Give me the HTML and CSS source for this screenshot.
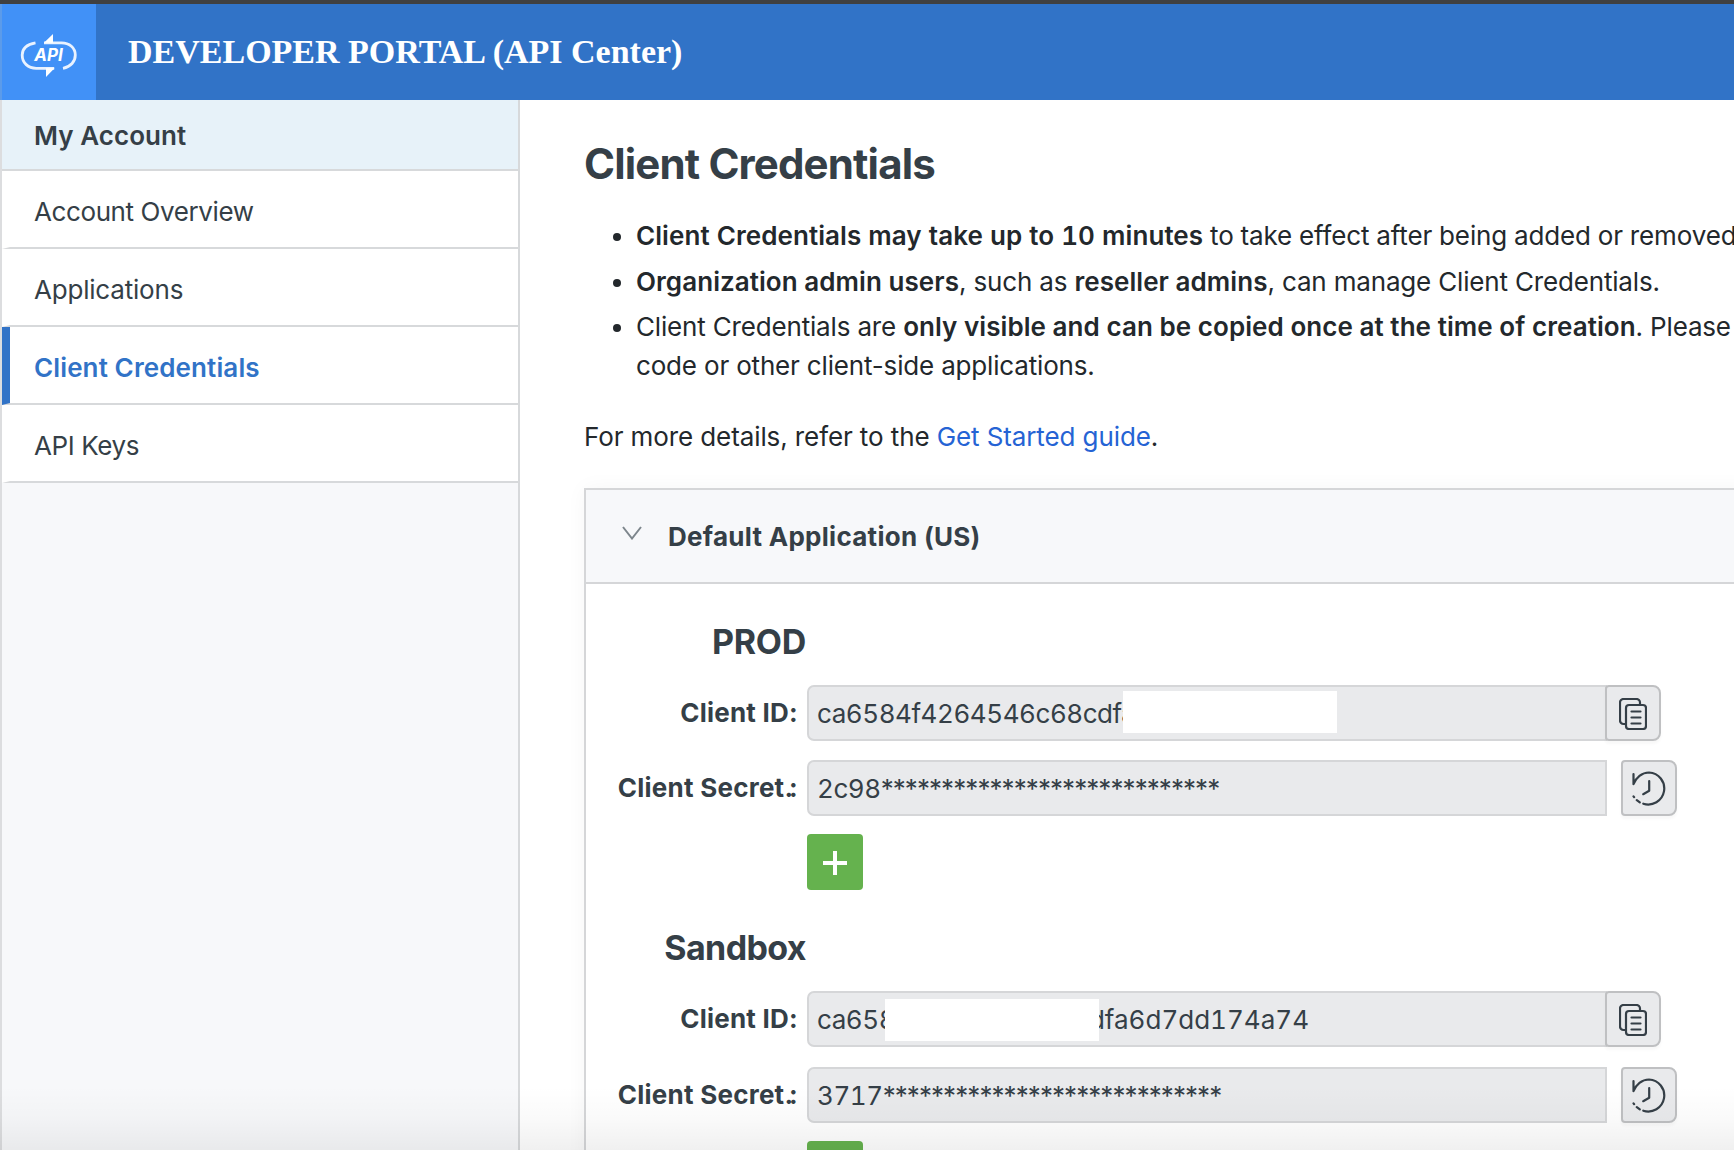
FILE: index.html
```html
<!DOCTYPE html>
<html lang="en">
<head>
<meta charset="utf-8">
<title>Developer Portal</title>
<link rel="stylesheet" href="styles.css">
</head>
<body>
<svg width="0" height="0" class="sprite" aria-hidden="true">
  <symbol id="copy" viewBox="0 0 28 32">
    <path d="M6.500 26H4.500a3.500 3.500 0 0 1-3.500-3.500V4.500A3.500 3.500 0 0 1 4.500 1h13A3.500 3.500 0 0 1 21 4.500v2"/>
    <rect x="7" y="7" width="20" height="24" rx="3"/>
    <path d="M12.500 13.500h9M12.500 19.500h9M12.500 25.500h9"/>
  </symbol>
  <symbol id="history" viewBox="0 0 34 36">
    <path d="M1.500 3v10.200C4 6.500 9.800 1.500 17 1.500A16 16 0 1 1 11.300 32.700"/>
    <path d="M1.500 25.300l.6.800M4.800 29.200l3 2.200"/>
    <path d="M17.200 10v9.800l-6 3.400"/>
  </symbol>
</svg>
<div class="page">
  <div class="topline"></div>
  <header class="header">
    <div class="logo">
      <svg width="58" height="48" viewBox="0 0 58 48">
        <path d="M15.500 9.800C6 11.500 2.200 16.500 2.200 22c0 8 6 13.300 14 13.300h18M24 9.800h17.500c8 0 13.800 5 13.800 12.200 0 6.500-4.500 11.800-12.300 13.300" fill="none" stroke="#e9f2ff" stroke-width="2.800"/>
        <path d="M24 9.800L33 1v8.800zM34.500 35.300L26 44v-8.700z" fill="#fff"/>
        <text x="28.500" y="28" text-anchor="middle">API</text>
      </svg>
    </div>
    <div class="brand">DEVELOPER PORTAL (API Center)</div>
  </header>
  <div class="main">
    <nav class="sidebar">
      <div class="nav-head">My Account</div>
      <a class="nav-item">Account Overview</a>
      <a class="nav-item loose">Applications</a>
      <a class="nav-item active">Client Credentials</a>
      <a class="nav-item">API Keys</a>
    </nav>
    <main class="content">
      <h1>Client Credentials</h1>
      <ul class="notes">
        <li class="wide"><b>Client Credentials may take up to 10 minutes</b> to take effect after being added or removed</li>
        <li><b>Organization admin users</b>, such as <b>reseller admins</b>, can manage Client Credentials.</li>
        <li>Client Credentials are <b>only visible and can be copied once at the time of creation</b>. Please<br>code or other client-side applications.</li>
      </ul>
      <p class="more">For more details, refer to the <a>Get Started guide</a>.</p>
      <section class="panel">
        <div class="panel-head">
          <svg class="chevron" width="20" height="14" viewBox="0 0 20 14"><path d="M1 1l9 11.500L19 1"/></svg>
          <span>Default Application (US)</span>
        </div>
        <div class="env">
          <h2>PROD</h2>
          <div class="row">
            <label>Client ID:</label>
            <div class="field"><span>ca6584f4264546c68cdfa</span><i class="mask mask-a"></i></div>
            <button class="btn joined"><svg class="i-copy"><use href="#copy"/></svg></button>
          </div>
          <div class="row">
            <label>Client Secret<span class="dot">.</span>:</label>
            <div class="field">2c98<span class="stars">****************************</span></div>
            <button class="btn apart"><svg class="i-hist"><use href="#history"/></svg></button>
          </div>
          <button class="add"></button>
        </div>
        <div class="env second">
          <h2 class="tight">Sandbox</h2>
          <div class="row">
            <label>Client ID:</label>
            <div class="field"><span>ca658</span><span class="tail">dfa6d7dd174a74</span><i class="mask mask-b"></i></div>
            <button class="btn joined"><svg class="i-copy"><use href="#copy"/></svg></button>
          </div>
          <div class="row">
            <label>Client Secret<span class="dot">.</span>:</label>
            <div class="field">3717<span class="stars">****************************</span></div>
            <button class="btn apart"><svg class="i-hist"><use href="#history"/></svg></button>
          </div>
          <button class="add"></button>
        </div>
      </section>
    </main>
  </div>
  <div class="fade"></div>
</div>
</body>
</html>
```
FILE: styles.css
```css
* { box-sizing: border-box; }
body { margin: 0; font-family: Inter, "Liberation Sans", sans-serif; font-size: 26px; line-height: 39px; color: #23282c; background: #fff; }
.sprite { position: absolute; }
.page { position: relative; width: 1734px; height: 1150px; overflow: hidden; display: flex; flex-direction: column; }
.topline { flex: none; height: 4px; background: #404040; }
.header { flex: none; display: flex; height: 96px; background: #3173c7; border-left: 2px solid #5b9bea; }
.logo { display: flex; align-items: center; justify-content: center; width: 94px; padding-top: 9px; background: #4191f7; }
.logo text { font: italic bold 17px Inter, sans-serif; fill: #fff; }
.brand { padding: 28px 0 0 32px; font: bold 34px/40px "Liberation Serif", serif; color: #fff; white-space: nowrap; }
.main { flex: 1; min-height: 0; display: flex; border-left: 2px solid #dcdddf; }
.sidebar { flex: none; width: 518px; background: #f7f8fa; border-right: 2px solid #d7d9db; color: #353f47; }
.nav-head { height: 71px; padding: 16px 0 0 32px; background: #e7f2f9; border-bottom: 2px solid #d7d9db; font-weight: 600; letter-spacing: .06px; }
.nav-item { display: block; height: 78px; padding: 21px 0 0 24px; background: #fff; border-bottom: 2px solid #d7d9db; border-left: 8px solid #fff; letter-spacing: -.4px; }
.nav-item.loose { letter-spacing: -.2px; }
.nav-item.active { border-left-color: #3173c7; color: #3173c7; font-weight: 600; letter-spacing: .12px; }
.content { flex: none; width: 1212px; padding-left: 64px; white-space: nowrap; }
h1 { margin: 38px 0 0; font-size: 42px; line-height: 52px; font-weight: 700; letter-spacing: -.85px; color: #353f47; }
.notes { margin: 26px 0 0; padding: 0 0 0 52px; letter-spacing: -.17px; }
.notes li { margin-bottom: 6.500px; }
b { font-weight: 600; letter-spacing: .06px; }
.wide { font-variant-numeric: tabular-nums; letter-spacing: -.12px; }
.wide b { letter-spacing: .07px; }
.more { margin: 32px 0 0; letter-spacing: -.1px; }
.more a { color: #2563d4; }
.panel { width: 1250px; margin-top: 32px; border: 2px solid #d5d6d8; box-shadow: 0 0 20px rgba(0,0,0,.04); height: 900px; }
.panel-head { display: flex; height: 94px; padding: 27px 0 0 36px; background: #f7f8fa; border-bottom: 2px solid #d5d6d8; font-weight: 700; color: #353f47; letter-spacing: .28px; }
.chevron { margin: 9px 26px 0 0; fill: none; stroke: #7d868c; stroke-width: 2; }
.env { padding-top: 36px; color: #353f47; }
h2 { width: 220px; margin: 0 0 22px; text-align: right; font-size: 34px; line-height: 43px; font-weight: 700; letter-spacing: -.3px; }
h2.tight { letter-spacing: -.6px; }
.row { display: flex; height: 56px; margin-bottom: 19px; }
.second .row { margin-bottom: 20px; }
label { width: 212px; padding-top: 8px; margin-right: 9px; text-align: right; font-weight: 700; letter-spacing: .24px; }
.dot { letter-spacing: -4px; }
.field { position: relative; display: flex; width: 800px; height: 56px; padding: 7px 0 0 8px; background: #e9eaec; border: 2px solid #d5d6d8; border-radius: 7px 0 0 7px; font-variant-numeric: tabular-nums; letter-spacing: -.45px; }
.stars { letter-spacing: -.93px; font-variant-numeric: normal; }
.tail { margin: 0 296px 0 auto; letter-spacing: 0; }
.mask { position: absolute; width: 214px; height: 42px; background: #fff; }
.mask-a { left: 314px; top: 4px; }
.mask-b { left: 76px; top: 6px; }
.btn { display: flex; align-items: center; justify-content: center; width: 56px; height: 56px; padding: 2px 0 0; background: #e9eaec; border: 2px solid #bfc0c2; border-radius: 4px 8px 8px 4px; box-shadow: 0 3px 3px rgba(0,0,0,.03); }
.btn svg { fill: none; stroke: #353f47; stroke-width: 2.200; stroke-linecap: round; stroke-linejoin: round; }
.joined { position: relative; margin-left: -2px; }
.apart { margin-left: 14px; }
.i-copy { width: 28px; height: 32px; }
.i-hist { width: 34px; height: 36px; }
.add { display: block; width: 56px; height: 56px; margin: -1px 0 0 221px; border: 0; border-radius: 4px; padding: 0; background: linear-gradient(#fff,#fff) 16px 27px/24px 4px no-repeat, linear-gradient(#fff,#fff) 26px 17px/4px 24px no-repeat, #65b24e; }
.second .add { margin-top: -2px; }
.fade { position: absolute; left: 0; right: 0; bottom: 0; height: 64px; background: linear-gradient(rgba(0,0,0,0), rgba(0,0,0,.02) 50%, rgba(0,0,0,.06)); }
```
